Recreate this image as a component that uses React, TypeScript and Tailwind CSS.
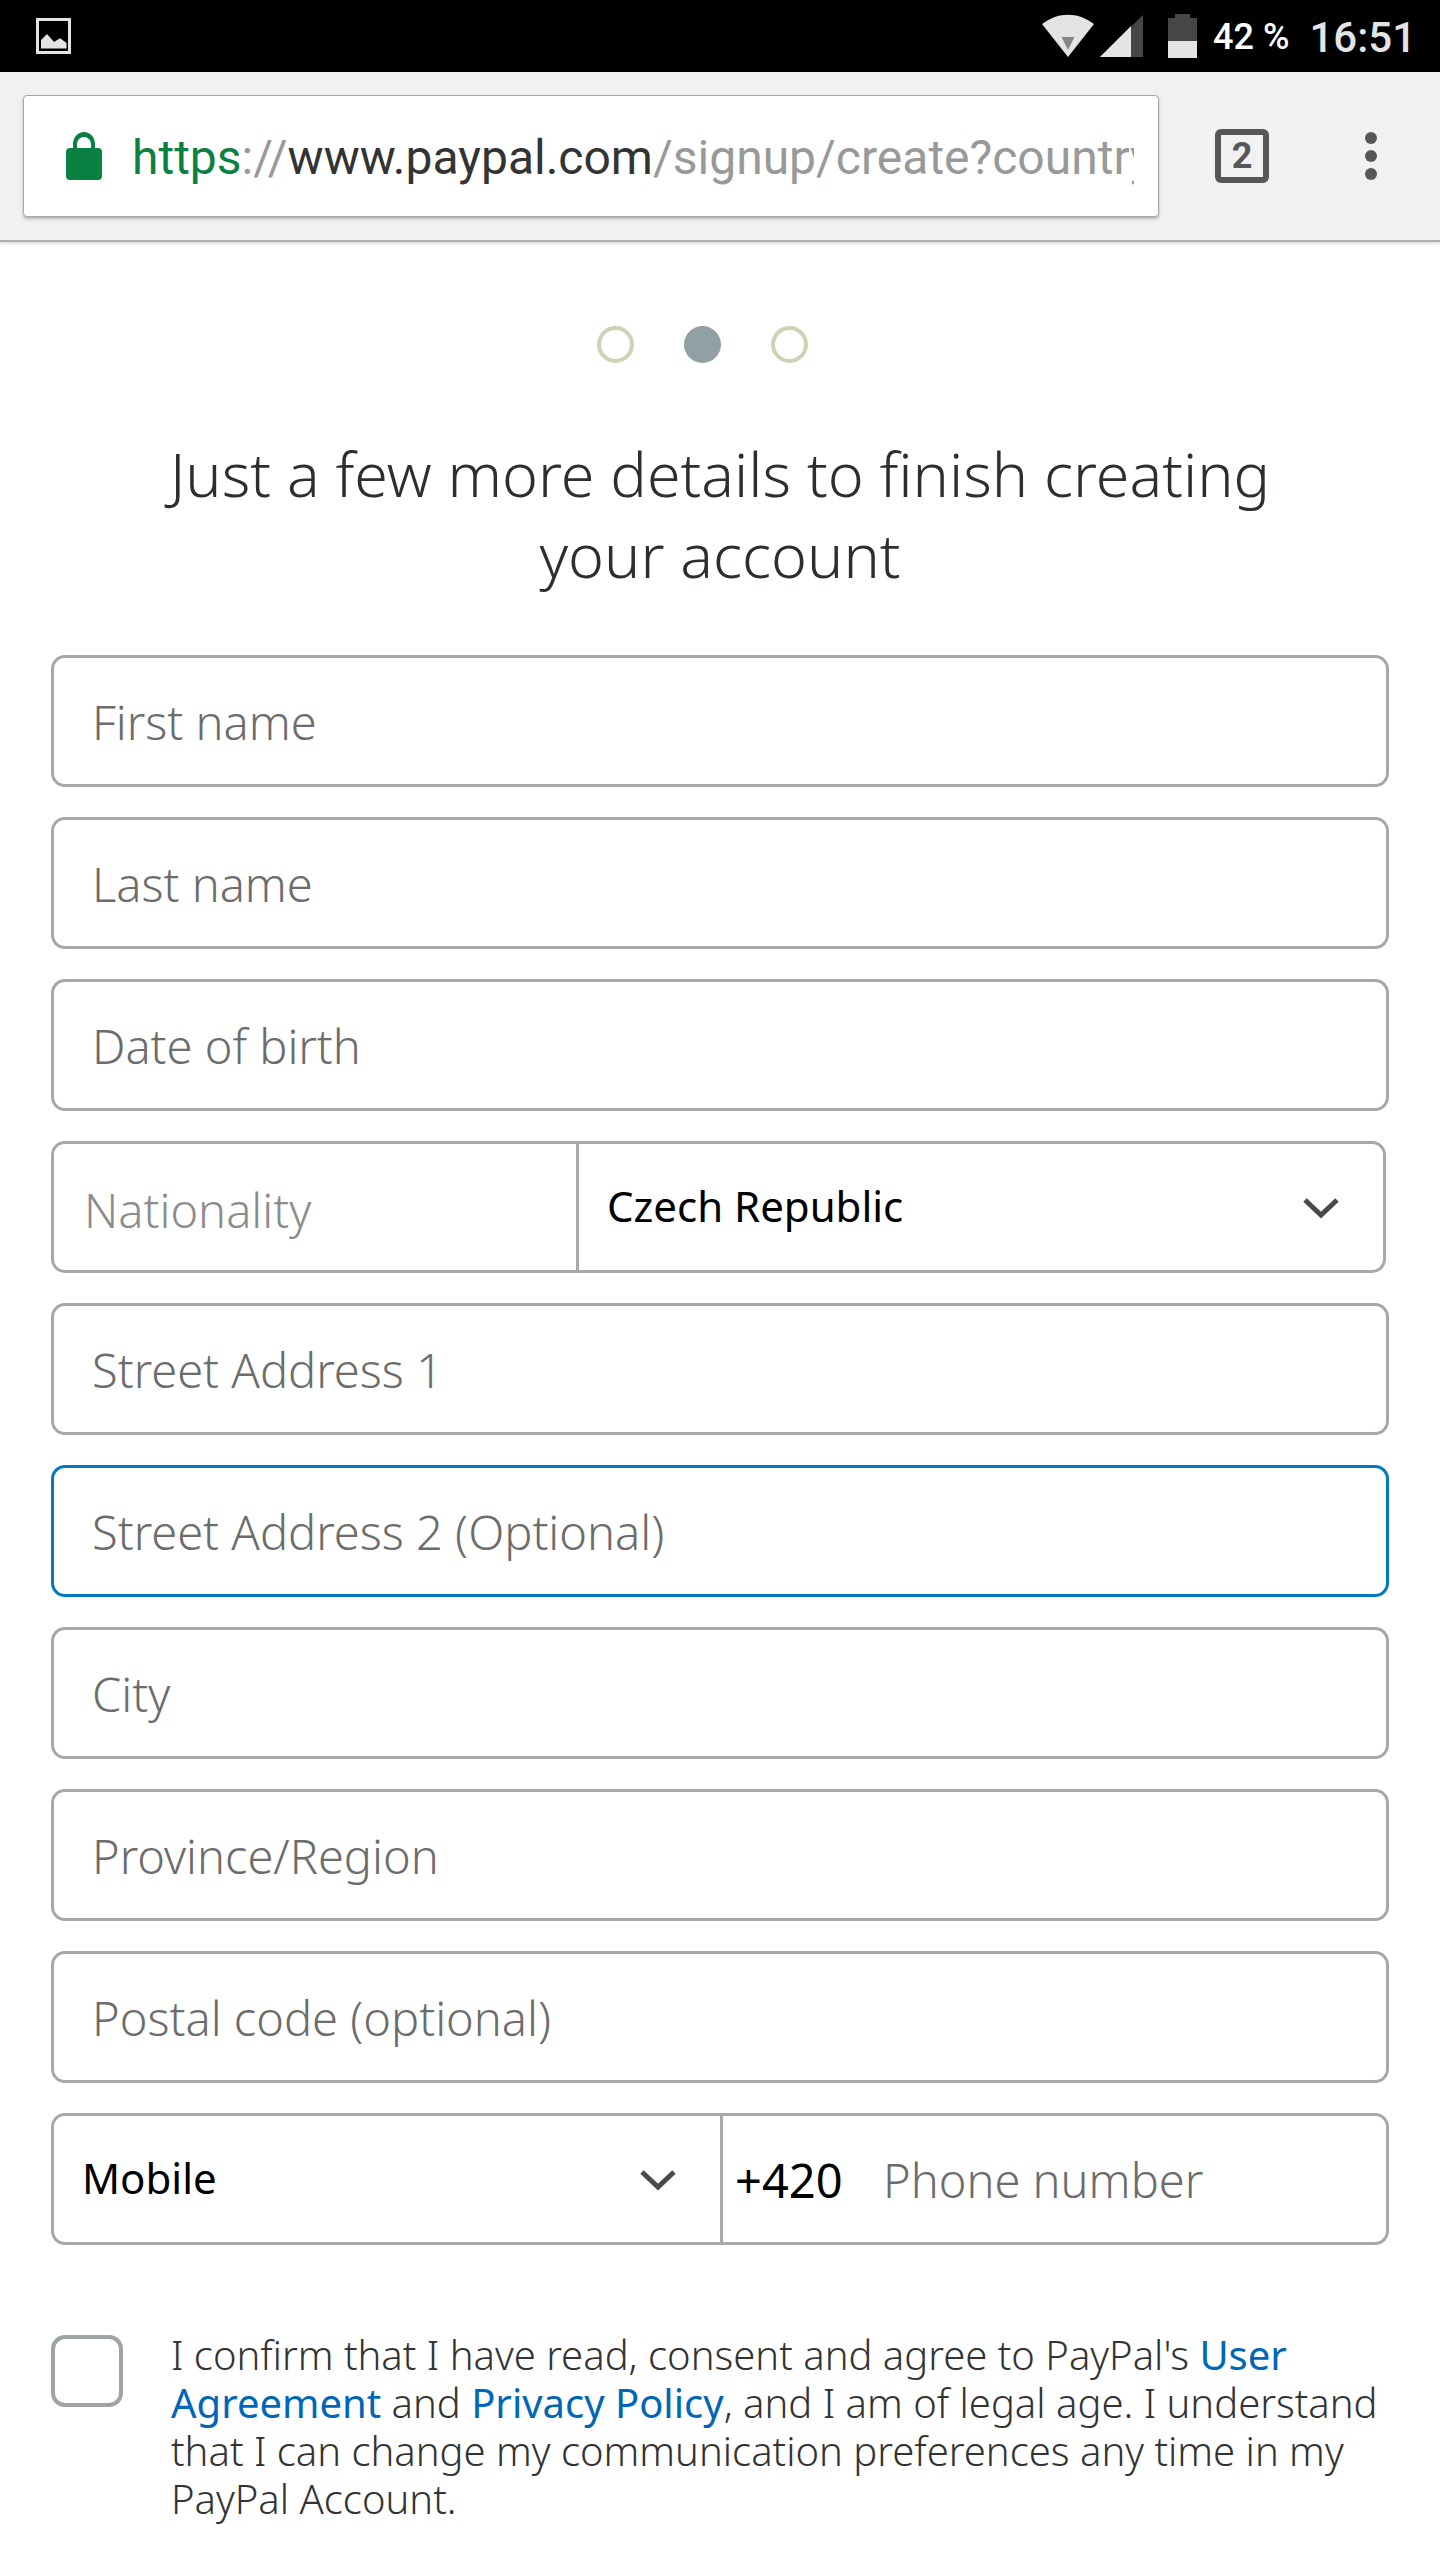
import { clsx } from 'clsx'

const addressFields = [
  { id: 'street1', label: 'Street Address 1' },
  { id: 'street2', label: 'Street Address 2 (Optional)', active: true },
  { id: 'city', label: 'City' },
  { id: 'region', label: 'Province/Region' },
  { id: 'postal', label: 'Postal code (optional)' },
]

const nameFields = [
  { id: 'firstName', label: 'First name' },
  { id: 'lastName', label: 'Last name' },
  { id: 'dob', label: 'Date of birth' },
]

function StatusBar() {
  return (
    <div className="flex h-[72px] items-center justify-between bg-black pr-6 pl-9 font-['Roboto',sans-serif] font-medium">
      <svg className="h-9 w-[35px]" viewBox="0 0 35 36" fill="none">
        <rect x="1.5" y="1.5" width="32" height="33" stroke="#e4e4e4" strokeWidth="3" />
        <path d="M5 30.500V22l5.500-5.500h1L18 24l5.500-3.500h1L30.500 25v5.500z" fill="#e4e4e4" />
      </svg>
      <div className="flex items-center">
        <svg className="h-11 w-[156px]" viewBox="0 0 156 44">
          <path d="M1 10C17-2.500 37-2.500 53 10L27 43z" fill="#e4e4e4" />
          <path d="M20.500 23h13L27 36z" fill="#868686" />
          <path d="M59 43L102 1v42z" fill="#464646" />
          <path d="M59 43L90 12v31z" fill="#e4e4e4" />
          <path d="M134 0h15v4h7v23h-29V4h7z" fill="#464646" />
          <path d="M127 27h29v17h-29z" fill="#e4e4e4" />
        </svg>
        <span className="pt-0.5 pl-4 text-[36px] text-white">42 %</span>
        <span className="pt-0.5 pl-5 text-[42px] text-[#e4e4e4]">16:51</span>
      </div>
    </div>
  )
}

function BrowserBar() {
  return (
    <header className="flex h-[170px] items-center border-b-2 border-[#b0b0b0] bg-[#f1f1f1] pl-[23px] shadow-[0_1px_3px_rgba(0,0,0,0.2)]">
      <button
        type="button"
        className="flex h-[122px] min-w-0 flex-1 items-center rounded-[4px] border border-[#a8a8a8] bg-white pr-6 pl-[42px] shadow-[0_2px_3px_rgba(0,0,0,0.25)]"
      >
        <svg className="h-12 w-9 shrink-0" viewBox="0 0 36 48">
          <path
            d="M4 16h3v-4a11 12 0 0 1 22 0v4h3a4 4 0 0 1 4 4v24a4 4 0 0 1-4 4H4a4 4 0 0 1-4-4V20a4 4 0 0 1 4-4zM11 16h14v-4a7 7 0 0 0-14 0z"
            fill="#0b8043"
            fillRule="evenodd"
          />
        </svg>
        <span className="ml-[30px] min-w-0 flex-1 overflow-hidden pt-1 text-left font-['Roboto',sans-serif] text-[48px] whitespace-nowrap text-[#999]">
          <span className="text-[#0b8043]">https</span>://
          <span className="text-[#333]">www.paypal.com</span>/signup/create?country
        </span>
      </button>
      <button
        type="button"
        aria-label="Open tabs"
        className="ml-14 flex size-[54px] items-center justify-center rounded-[6px] border-6 border-[#575757] font-['Roboto',sans-serif] text-[36px] leading-none font-bold text-[#575757]"
      >
        2
      </button>
      <button type="button" aria-label="Menu" className="mr-[63px] ml-24">
        <svg className="h-12 w-3" viewBox="0 0 12 48" fill="#575757">
          <circle cx="6" cy="6" r="6" />
          <circle cx="6" cy="24" r="6" />
          <circle cx="6" cy="42" r="6" />
        </svg>
      </button>
    </header>
  )
}

function TextField({ id, label, active }: { id: string; label: string; active?: boolean }) {
  return (
    <input
      id={id}
      type="text"
      aria-label={label}
      placeholder={label}
      className={clsx(
        'h-[132px] w-full rounded-[14px] border-3 px-[38px] pt-0.5 text-[47px] font-light outline-none placeholder:text-[#6c6c6c]',
        active ? 'border-[#0079c1]' : 'border-[#a8a8a8]'
      )}
    />
  )
}

function SelectField({ id, label, value }: { id: string; label?: string; value: string }) {
  return (
    <div className="relative h-full flex-1">
      <select
        id={id}
        aria-label={label}
        className="h-full w-full appearance-none bg-transparent pb-1 pl-7 text-[42px] text-black outline-none"
      >
        <option>{value}</option>
      </select>
      <svg
        className="pointer-events-none absolute top-1/2 right-11 h-6 w-9 -translate-y-1/2"
        viewBox="0 0 36 24"
        fill="none"
        stroke="#4a4a4a"
        strokeWidth="5"
      >
        <path d="M2 5l16 15L34 5" />
      </svg>
    </div>
  )
}

export default function App() {
  return (
    <div className="min-h-screen bg-white font-['Noto_Sans',sans-serif]">
      <StatusBar />
      <BrowserBar />

      <main className="px-[51px] pt-[84px] pb-9">
        {/* Step indicator */}
        <div className="flex justify-center gap-[50px] pr-9">
          <span className="size-[37px] rounded-full border-4 border-[#ccd4b5]" />
          <span className="size-[37px] rounded-full bg-[#90a0a5]" />
          <span className="size-[37px] rounded-full border-4 border-[#ccd4b5]" />
        </div>

        <h1 className="mt-[70px] px-24 text-center text-[61px] leading-[81px] font-light text-[#2c2e2f]">
          Just a few more details to finish creating your account
        </h1>

        <form className="mt-[60px]">
          <div className="flex flex-col gap-[30px]">
            {nameFields.map((field) => (
              <TextField key={field.id} {...field} />
            ))}

            {/* Nationality */}
            <div className="mr-[3px] flex h-[132px] items-center rounded-[14px] border-3 border-[#a8a8a8]">
              <label htmlFor="nationality" className="w-[522px] pt-1.5 pl-[30px] text-[47px] font-light text-[#8c8c8c]">
                Nationality
              </label>
              <div className="h-full flex-1 border-l-3 border-[#a8a8a8]">
                <SelectField id="nationality" value="Czech Republic" />
              </div>
            </div>

            {addressFields.map((field) => (
              <TextField key={field.id} {...field} />
            ))}

            {/* Phone */}
            <div className="grid h-[132px] grid-cols-2 rounded-[14px] border-3 border-[#a8a8a8]">
              <SelectField id="phoneType" label="Phone type" value="Mobile" />
              <div className="flex h-full min-w-0 items-center border-l-3 border-[#a8a8a8] pl-3">
                <span className="w-[148px] pt-0.5 text-[47px] text-black">+420</span>
                <input
                  id="phone"
                  type="tel"
                  aria-label="Phone number"
                  placeholder="Phone number"
                  className="h-full min-w-0 flex-1 pt-0.5 text-[47px] font-light outline-none placeholder:text-[#6c6c6c]"
                />
              </div>
            </div>
          </div>

          <div className="mt-[86px] flex items-start gap-12">
            <input
              id="agree"
              type="checkbox"
              className="mt-1 size-[72px] shrink-0 appearance-none rounded-[14px] border-4 border-[#9da3a6] bg-white"
            />
            <label htmlFor="agree" className="text-[40px] leading-[48px] font-light text-[#333]">
              I confirm that I have read, consent and agree to PayPal's{' '}
              <a href="#user-agreement" className="font-normal text-[#0066b7]">User Agreement</a> and{' '}
              <a href="#privacy" className="font-normal text-[#0066b7]">Privacy Policy</a>, and I am of legal age. I
              understand that I can change my communication preferences any time in my PayPal Account.
            </label>
          </div>
        </form>
      </main>
    </div>
  )
}
